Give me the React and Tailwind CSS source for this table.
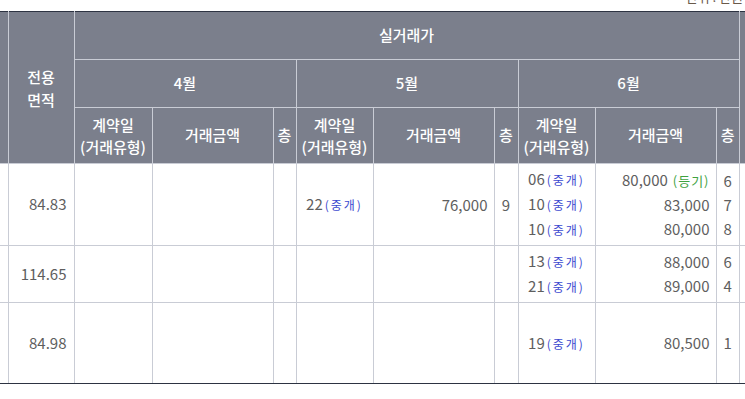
import React from 'react';

const rows = [
  {
    area: '84.83',
    h: 'h-[82px]',
    may: { day: '22', price: '76,000', floor: '9' },
    june: [
      { day: '06', price: '80,000', reg: true, floor: '6' },
      { day: '10', price: '83,000', floor: '7' },
      { day: '10', price: '80,000', floor: '8' },
    ],
  },
  {
    area: '114.65',
    h: 'h-[57px]',
    june: [
      { day: '13', price: '88,000', floor: '6' },
      { day: '21', price: '89,000', floor: '4' },
    ],
  },
  {
    area: '84.98',
    h: 'h-[81px]',
    june: [{ day: '19', price: '80,500', floor: '1' }],
    last: true,
  },
];

const th = 'border border-[#c9ccd5] bg-[#7b7f8c] text-white font-medium text-[15px] text-center align-middle p-0';
const td = 'border border-[#c9ccd5] bg-white p-0 align-middle text-[15px] text-[#5e5e5e]';

const Broker = () => (
  <span className="text-[12px] tracking-[2px] text-[#3b49d0] ml-[2px]">(중개)</span>
);

const MonthCells = ({ items, cls }) => {
  if (!items) {
    return (
      <>
        <td className={`${td} ${cls}`}></td>
        <td className={`${td} ${cls}`}></td>
        <td className={`${td} ${cls}`}></td>
      </>
    );
  }
  return (
    <>
      <td className={`${td} ${cls} text-center`}>
        {items.map((it, i) => (
          <div key={i} className="leading-[24px]">
            {it.day}
            <Broker />
          </div>
        ))}
      </td>
      <td className={`${td} ${cls} text-right pr-[6px]`}>
        {items.map((it, i) => (
          <div key={i} className="leading-[24px]">
            {it.price}
            {it.reg && <span className="text-[13px] tracking-[1px] text-[#3fa33f] ml-[5px]">(등기)</span>}
          </div>
        ))}
      </td>
      <td className={`${td} ${cls} text-center`}>
        {items.map((it, i) => (
          <div key={i} className="leading-[24px]">{it.floor}</div>
        ))}
      </td>
    </>
  );
};

const SubHeads = () => (
  <>
    <th className={`${th} leading-[22px]`}>
      계약일
      <br />
      (거래유형)
    </th>
    <th className={th}>거래금액</th>
    <th className={th}>층</th>
  </>
);

export default function App() {
  const top = 'border-t-[#2d3342]';
  return (
    <div
      className="w-[745px] h-[399px] overflow-hidden bg-white"
      style={{ fontFamily: '"Noto Sans CJK KR", "Noto Sans", sans-serif' }}
    >
      <div className="h-[11px] overflow-hidden flex justify-end pr-[2px]">
        <span className="-mt-[11px] leading-[16px] text-[13px] text-[#6a5a4a]">단위 : 만원</span>
      </div>
      <table className="table-fixed border-collapse w-[799px]">
        <colgroup>
          <col className="w-[8px]" />
          <col className="w-[66px]" />
          <col className="w-[78px]" />
          <col className="w-[121px]" />
          <col className="w-[23px]" />
          <col className="w-[77px]" />
          <col className="w-[121px]" />
          <col className="w-[24px]" />
          <col className="w-[77px]" />
          <col className="w-[121px]" />
          <col className="w-[23px]" />
          <col className="w-[60px]" />
        </colgroup>
        <thead>
          <tr className="h-[48px]">
            <th rowSpan={3} className={`${th} ${top} border-l-0`}></th>
            <th rowSpan={3} className={`${th} ${top} leading-[23px]`}>
              전용
              <br />
              면적
            </th>
            <th colSpan={9} className={`${th} ${top}`}>실거래가</th>
            <th rowSpan={3} className={`${th} ${top}`}></th>
          </tr>
          <tr className="h-[48px]">
            <th colSpan={3} className={`${th} font-bold`}>4월</th>
            <th colSpan={3} className={`${th} font-bold`}>5월</th>
            <th colSpan={3} className={`${th} font-bold`}>6월</th>
          </tr>
          <tr className="h-[56px]">
            <SubHeads />
            <SubHeads />
            <SubHeads />
          </tr>
        </thead>
        <tbody>
          {rows.map((r, i) => {
            const cls = r.last ? 'border-b-[#2d3342]' : '';
            return (
              <tr key={i} className={r.h}>
                <td className={`${td} ${cls} border-l-0`}></td>
                <td className={`${td} ${cls} text-right pr-[7px]`}>{r.area}</td>
                <MonthCells cls={cls} />
                {r.may ? <MonthCells items={[r.may]} cls={cls} /> : <MonthCells cls={cls} />}
                <MonthCells items={r.june} cls={cls} />
                <td className={`${td} ${cls}`}></td>
              </tr>
            );
          })}
        </tbody>
      </table>
    </div>
  );
}
